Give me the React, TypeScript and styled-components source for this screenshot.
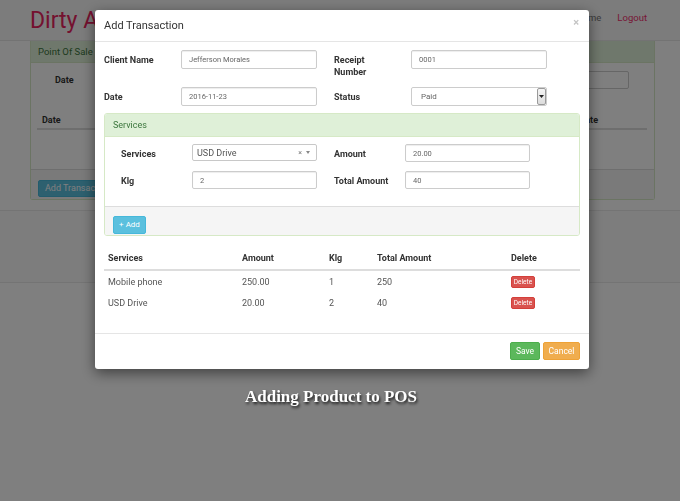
import React from "react";
import styled, { createGlobalStyle } from "styled-components";

const Global = createGlobalStyle`
  html, body { margin: 0; padding: 0; background: #ffffff; }
  body { font-family: Roboto, "Liberation Sans", Arial, sans-serif; color: #333; }
  * { box-sizing: border-box; }
`;

/* ---------- background page ---------- */
const Page = styled.div`
  width: 680px;
  height: 501px;
  overflow: hidden;
  background: #fff;
`;

const Navbar = styled.header`
  height: 41px;
  background: #f8f8f8;
  border-bottom: 1px solid #e7e7e7;
  display: flex;
  align-items: center;
  justify-content: space-between;
  padding: 0 33px 0 30px;
`;

const Brand = styled.div`
  font-family: Roboto, "Liberation Sans", sans-serif;
  font-size: 23px;
  color: #e8225e;
  line-height: 1;
  margin-top: 1px;
`;

const Nav = styled.nav`
  display: flex;
  gap: 16px;
  align-items: center;
  margin-top: -6px;
`;

const NavLink = styled.span<{ $accent?: boolean }>`
  font-size: 9.5px;
  color: ${(p) => (p.$accent ? "#f0306e" : "#777")};
`;

const BgPanel = styled.section`
  margin: 0 25px 0 30px;
  border: 1px solid #d6e9c6;
  border-top: 0;
  border-radius: 0 0 3px 3px;
`;

const BgHeading = styled.div`
  height: 22px;
  background: #dff0d8;
  border-bottom: 1px solid #d6e9c6;
  color: #3c763d;
  font-size: 9.5px;
  display: flex;
  align-items: center;
  padding-left: 7px;
`;

const BgBody = styled.div`
  height: 106px;
  padding: 8px 7px 0 6px;
`;

const BgFilter = styled.div`
  display: flex;
  align-items: center;
  justify-content: space-between;
  height: 18px;
  padding: 0 18px 0 18px;
`;

const BgLabel = styled.span`
  font-size: 9px;
  font-weight: 700;
`;

const BgInput = styled.div`
  width: 220px;
  height: 18px;
  border: 1px solid #ccc;
  border-radius: 2px;
`;

const BgTableHead = styled.div`
  margin-top: 22px;
  height: 19px;
  border-bottom: 2px solid #ddd;
  display: flex;
  align-items: center;
  justify-content: space-between;
  padding: 0 49px 0 5px;
  font-size: 9px;
  font-weight: 700;
`;

const BgFooter = styled.div`
  height: 30px;
  background: #f5f5f5;
  border-top: 1px solid #ddd;
  padding: 6px 7px;
`;

const BgButton = styled.span`
  display: inline-flex;
  align-items: center;
  height: 17px;
  padding: 0 6px;
  background: #5bc0de;
  border: 1px solid #46b8da;
  border-radius: 2px;
  color: #fff;
  font-size: 9px;
`;

const Band = styled.div`
  margin-top: 10px;
  height: 73px;
  background: #fafafa;
  border-top: 1px solid #e9e9e9;
  border-bottom: 1px solid #e9e9e9;
`;

/* ---------- overlay & modal ---------- */
const Backdrop = styled.div`
  position: fixed;
  inset: 0;
  background: rgba(0, 0, 0, 0.5);
  display: flex;
  flex-direction: column;
  padding: 10px 0 0 95px;
`;

const Modal = styled.div`
  width: 494px;
  background: #fff;
  border-radius: 3px;
  box-shadow: 0 4px 14px rgba(0, 0, 0, 0.5);
  overflow: hidden;
`;

const ModalHeader = styled.div`
  height: 32px;
  border-bottom: 1px solid #e5e5e5;
  display: flex;
  align-items: center;
  justify-content: space-between;
  padding: 0 10px 0 9px;
`;

const ModalTitle = styled.h4`
  margin: 0;
  font-size: 11px;
  font-weight: 400;
  color: #333;
`;

const Close = styled.span`
  font-size: 11px;
  font-weight: 700;
  color: #c4c4c4;
  margin-top: -6px;
`;

const ModalBody = styled.div`
  padding: 8px 9px 19px;
`;

const Rows = styled.div`
  display: flex;
  flex-direction: column;
  gap: 9px;
`;

const FormRow = styled.div<{ $gap: number }>`
  display: flex;
  align-items: flex-start;
  gap: ${(p) => p.$gap}px;
`;

const Field = styled.div`
  display: flex;
  align-items: flex-start;
`;

const Label = styled.label<{ $w: number; $pt: number }>`
  width: ${(p) => p.$w}px;
  flex: none;
  padding-top: ${(p) => p.$pt}px;
  font-size: 9px;
  font-weight: 700;
  line-height: 12px;
  color: #333;
`;

const Input = styled.input<{ $w: number; $h: number }>`
  width: ${(p) => p.$w}px;
  height: ${(p) => p.$h}px;
  border: 1px solid #ccc;
  border-radius: 2px;
  box-shadow: inset 0 1px 1px rgba(0, 0, 0, 0.075);
  padding: 0 7px;
  font-family: Roboto, "Liberation Sans", sans-serif;
  font-size: 7.5px;
  color: #666;
  outline: none;
  margin: 0;
`;

const NativeSelect = styled.div`
  width: 136px;
  height: 19px;
  border: 1px solid #ccc;
  border-radius: 2px;
  display: flex;
  align-items: center;
  padding: 0 0 0 9px;
  font-size: 8px;
  color: #666;
`;

const SelectText = styled.span`
  flex: 1;
`;

const DropButton = styled.span`
  width: 9px;
  height: 17px;
  border: 1px solid #9a9a9a;
  border-radius: 2px;
  background: linear-gradient(#f4f4f4, #dcdcdc);
  display: flex;
  align-items: center;
  justify-content: center;
`;

const Select2 = styled.div`
  width: 125px;
  height: 17px;
  border: 1px solid #c8c8c8;
  border-radius: 2px;
  display: flex;
  align-items: center;
  padding: 0 6px 0 4px;
  font-size: 9px;
  color: #555;
`;

const Select2Icons = styled.span`
  display: flex;
  gap: 4px;
  align-items: center;
  font-size: 7px;
  color: #777;
`;

const Panel = styled.section`
  margin-top: 7px;
  border: 1px solid #d6e9c6;
  border-radius: 3px;
  overflow: hidden;
`;

const PanelHeading = styled.div`
  height: 23px;
  background: #dff0d8;
  border-bottom: 1px solid #d6e9c6;
  color: #3c763d;
  font-size: 9px;
  display: flex;
  align-items: center;
  padding-left: 8px;
`;

const PanelBody = styled.div`
  padding: 7px 16px 17px;
`;

const PanelFooter = styled.div`
  background: #f5f5f5;
  border-top: 1px solid #ddd;
  padding: 5px 8px;
  height: 29px;
`;

const Btn = styled.button<{ $bg: string; $bd: string; $w: number; $h: number; $fs: number }>`
  width: ${(p) => p.$w}px;
  height: ${(p) => p.$h}px;
  background: ${(p) => p.$bg};
  border: 1px solid ${(p) => p.$bd};
  border-radius: 2px;
  color: #fff;
  font-family: Roboto, "Liberation Sans", sans-serif;
  font-size: ${(p) => p.$fs}px;
  padding: 0;
  display: inline-flex;
  align-items: center;
  justify-content: center;
  cursor: pointer;
`;

const Table = styled.table`
  margin-top: 11px;
  width: 476px;
  border-collapse: collapse;
  table-layout: fixed;
`;

const Th = styled.th`
  height: 23px;
  border-bottom: 2px solid #ddd;
  text-align: left;
  padding: 0 4px;
  font-size: 9px;
  font-weight: 700;
  color: #333;
`;

const Td = styled.td`
  height: 22px;
  padding: 0 4px;
  font-size: 9px;
  color: #555;
`;

const ModalFooter = styled.div`
  border-top: 1px solid #e5e5e5;
  padding: 8px 9px 9px;
  display: flex;
  justify-content: flex-end;
  gap: 3px;
`;

const Caption = styled.div`
  width: 494px;
  margin-top: 18px;
  padding-right: 22px;
  text-align: center;
  font-family: "Liberation Serif", "Times New Roman", serif;
  font-weight: 700;
  font-size: 17px;
  line-height: 20px;
  color: #fff;
  text-shadow: 1px 2px 3px rgba(0, 0, 0, 0.85);
`;

const items = [
  { name: "Mobile phone", amount: "250.00", klg: "1", total: "250" },
  { name: "USD Drive", amount: "20.00", klg: "2", total: "40" },
];

export default function App() {
  return (
    <>
      <Global />
      <Page>
        <Navbar>
          <Brand>Dirty Apps</Brand>
          <Nav>
            <NavLink>Home</NavLink>
            <NavLink $accent>Logout</NavLink>
          </Nav>
        </Navbar>
        <BgPanel>
          <BgHeading>Point Of Sale</BgHeading>
          <BgBody>
            <BgFilter>
              <BgLabel>Date</BgLabel>
              <BgInput />
            </BgFilter>
            <BgTableHead>
              <span>Date</span>
              <span>Date</span>
            </BgTableHead>
          </BgBody>
          <BgFooter>
            <BgButton>Add Transaction</BgButton>
          </BgFooter>
        </BgPanel>
        <Band />
      </Page>

      <Backdrop>
        <Modal>
          <ModalHeader>
            <ModalTitle>Add Transaction</ModalTitle>
            <Close>×</Close>
          </ModalHeader>
          <ModalBody>
            <Rows>
              <FormRow $gap={17}>
                <Field>
                  <Label $w={77} $pt={4}>Client Name</Label>
                  <Input $w={136} $h={19} readOnly value="Jefferson Morales" />
                </Field>
                <Field>
                  <Label $w={77} $pt={4}>Receipt<br />Number</Label>
                  <Input $w={136} $h={19} readOnly value="0001" />
                </Field>
              </FormRow>
              <FormRow $gap={17}>
                <Field>
                  <Label $w={77} $pt={4}>Date</Label>
                  <Input $w={136} $h={19} readOnly value="2016-11-23" />
                </Field>
                <Field>
                  <Label $w={77} $pt={4}>Status</Label>
                  <NativeSelect>
                    <SelectText>Paid</SelectText>
                    <DropButton>
                      <svg width="5" height="3" viewBox="0 0 5 3">
                        <path d="M0 0h5L2.5 3z" fill="#222" />
                      </svg>
                    </DropButton>
                  </NativeSelect>
                </Field>
              </FormRow>
            </Rows>

            <Panel>
              <PanelHeading>Services</PanelHeading>
              <PanelBody>
                <Rows>
                  <FormRow $gap={17}>
                    <Field>
                      <Label $w={71} $pt={4}>Services</Label>
                      <Select2>
                        <SelectText>USD Drive</SelectText>
                        <Select2Icons>
                          <span>×</span>
                          <svg width="4" height="3" viewBox="0 0 4 3">
                            <path d="M0 0h4L2 3z" fill="#888" />
                          </svg>
                        </Select2Icons>
                      </Select2>
                    </Field>
                    <Field>
                      <Label $w={71} $pt={4}>Amount</Label>
                      <Input $w={125} $h={18} readOnly value="20.00" />
                    </Field>
                  </FormRow>
                  <FormRow $gap={17}>
                    <Field>
                      <Label $w={71} $pt={4}>Klg</Label>
                      <Input $w={125} $h={18} readOnly value="2" />
                    </Field>
                    <Field>
                      <Label $w={71} $pt={4}>Total Amount</Label>
                      <Input $w={125} $h={18} readOnly value="40" />
                    </Field>
                  </FormRow>
                </Rows>
              </PanelBody>
              <PanelFooter>
                <Btn $bg="#5bc0de" $bd="#46b8da" $w={33} $h={18} $fs={8}>+ Add</Btn>
              </PanelFooter>
            </Panel>

            <Table>
              <colgroup>
                <col style={{ width: 134 }} />
                <col style={{ width: 87 }} />
                <col style={{ width: 48 }} />
                <col style={{ width: 134 }} />
                <col style={{ width: 73 }} />
              </colgroup>
              <thead>
                <tr>
                  <Th>Services</Th>
                  <Th>Amount</Th>
                  <Th>Klg</Th>
                  <Th>Total Amount</Th>
                  <Th>Delete</Th>
                </tr>
              </thead>
              <tbody>
                {items.map((it) => (
                  <tr key={it.name}>
                    <Td>{it.name}</Td>
                    <Td>{it.amount}</Td>
                    <Td>{it.klg}</Td>
                    <Td>{it.total}</Td>
                    <Td>
                      <Btn $bg="#d9534f" $bd="#d43f3a" $w={24} $h={12} $fs={6.5}>Delete</Btn>
                    </Td>
                  </tr>
                ))}
              </tbody>
            </Table>
          </ModalBody>
          <ModalFooter>
            <Btn $bg="#5cb85c" $bd="#4cae4c" $w={30} $h={18} $fs={8.5}>Save</Btn>
            <Btn $bg="#f0ad4e" $bd="#eea236" $w={37} $h={18} $fs={8.5}>Cancel</Btn>
          </ModalFooter>
        </Modal>
        <Caption>Adding Product to POS</Caption>
      </Backdrop>
    </>
  );
}
